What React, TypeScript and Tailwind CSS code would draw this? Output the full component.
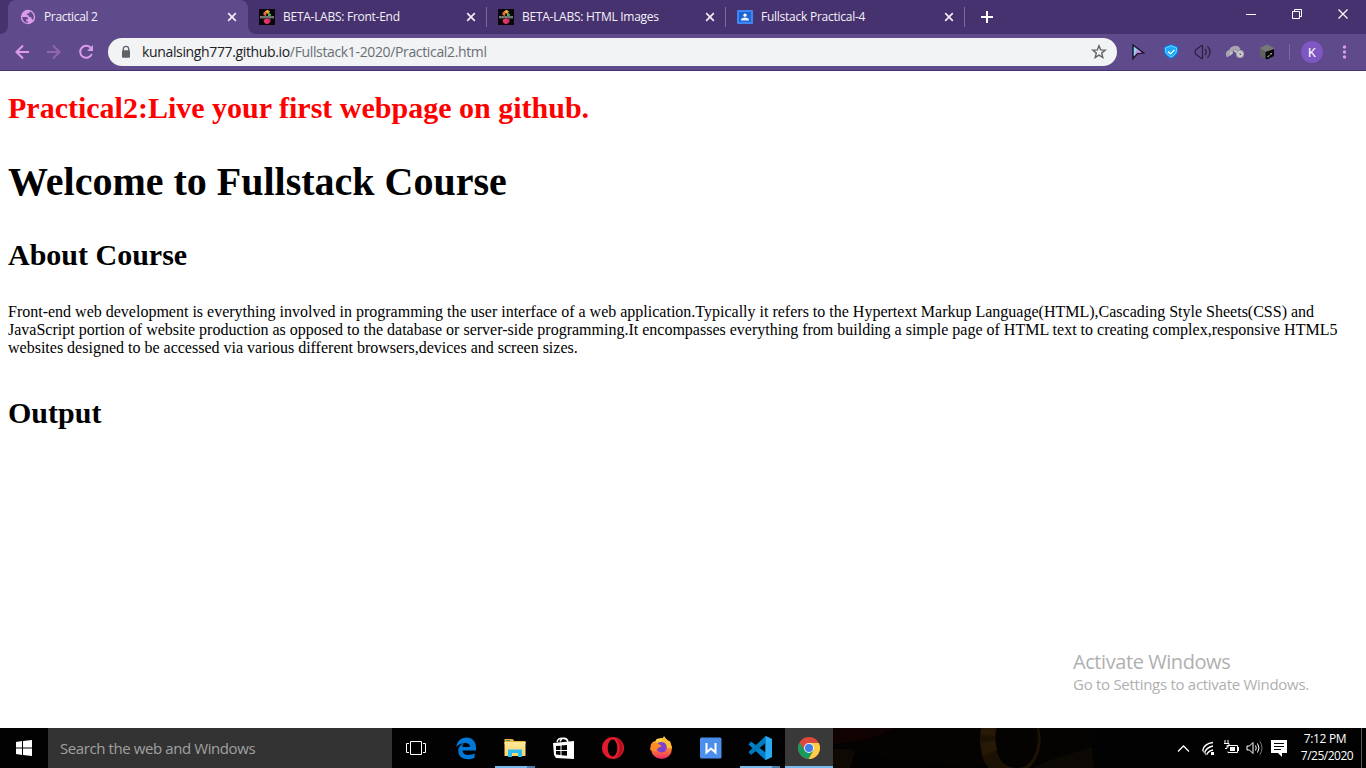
import type { ReactNode } from "react";

function Globe() {
  return (
    <svg width="16" height="16" viewBox="0 0 16 16" className="shrink-0">
      <circle cx="8" cy="8" r="7.2" fill="#dc9ceb" />
      <path d="M2.3 8.1h4.1c1.5 0 1.7 1 1.5 2.2H6.3v2.1H8v1.6C4.700 14 2.300 11.400 2.300 8.100zM9.600 2.400c2.500.7 4.200 3 4.200 5.600 0 1-.3 2-.8 2.900l-1.300-1.100c-.5-.5-.3-1.300-1-1.700-.8-.4-2.200-.1-2.200-1.200V5.900H6.900V4.600h1.500c.8 0 1.200-.9 1.200-2.200z" fill="#5f4b8b" />
    </svg>
  );
}

function BetaLabs() {
  return (
    <svg width="16" height="16" viewBox="0 0 16 16" className="shrink-0">
      <path fill="#080808" d="M0 0h16v16H0z" />
      <path d="M4.500 6V3.500L8 1.500 7 7z" fill="#ef6a3a" />
      <path d="M6 2.500L8.500 .8 11 2.500 9 5z" fill="#f4a93c" />
      <path d="M9 3.500l3 1.500-.5 3H9z" fill="#4fae55" />
      <path d="M4.500 11l3-1.500 4 1-.5 3L8 15.200 5.500 14z" fill="#e63863" />
      <path d="M8.500 10.500l3 .5-.5 2.500-2.500 1.300z" fill="#c92b78" />
      <path d="M1 7h14v2.500H1z" fill="#696767" />
      <path d="M1.500 8h1m2 0h1m2 0h1m2 0h1m2 0h1" stroke="#aaa" fill="none" />
    </svg>
  );
}

function Classroom() {
  return (
    <svg width="16" height="16" viewBox="0 0 16 16" className="shrink-0">
      <rect y="1" width="16" height="14" rx="1" fill="#4285f4" />
      <path fill="#1967d2" d="M2 3h12v10H2z" />
      <circle cx="8" cy="6.200" r="1.600" fill="#fff" />
      <path d="M4 11.500V10.500c0-1.300 2.500-2 4-2s4 .7 4 2v1z" fill="#e8f0fe" />
    </svg>
  );
}

function Close() {
  return (
    <svg width="16" height="16" viewBox="0 0 16 16" className="shrink-0">
      <path d="M4.200 4.200l7.600 7.600m0-7.600l-7.600 7.600" stroke="#f1ecf6" strokeWidth="1.700" />
    </svg>
  );
}

function Tab({ icon, children }: { icon: ReactNode; children: ReactNode }) {
  return (
    <div className="flex h-[34px] w-[239px] shrink-0 items-center pl-[11px]">
      {icon}
      <div className="ml-2 flex-1 whitespace-nowrap text-[12px] leading-4 text-[#f5f1fa]">{children}</div>
      <Close />
      <div className="ml-[7px] h-5 w-px bg-[#7c6b9c]" />
    </div>
  );
}

function TabStrip() {
  return (
    <div className="flex h-[34px] bg-[#46326e]">
      <div className="w-2 bg-[#5f4b8b]"><div className="h-full rounded-br-lg bg-[#46326e]" /></div>
      <div className="flex h-[34px] w-[240px] shrink-0 items-center rounded-t-lg bg-[#5f4b8b] pl-3 pr-2">
        <Globe />
        <div className="ml-2 flex-1 whitespace-nowrap text-[12px] leading-4 tracking-[-0.35px] text-[#f5f1fa]">Practical 2</div>
        <Close />
      </div>
      <div className="-mr-2 w-2 bg-[#5f4b8b]"><div className="h-full rounded-bl-lg bg-[#46326e]" /></div>
      <Tab icon={<BetaLabs />}><span className="tracking-[-0.27px]">BETA-LABS: Front-End</span></Tab>
      <Tab icon={<BetaLabs />}><span className="tracking-[-0.27px]">BETA-LABS: HTML Images</span></Tab>
      <Tab icon={<Classroom />}><span className="tracking-[-0.25px]">Fullstack Practical-4</span></Tab>
      <svg width="42" height="34" viewBox="0 0 42 34"><path d="M16 17h12M22 11v12" stroke="#fff" strokeWidth="2" /></svg>
      <svg width="138" height="34" viewBox="0 0 138 34" className="ml-auto" fill="none" stroke="#fff">
        <path d="M18 14.500h10M64.500 11.500h7v7h-7zM66.500 11.500v-2h7v7h-2" />
        <path d="M110.500 9.500l9 9m0-9l-9 9" strokeWidth="1.200" />
      </svg>
    </div>
  );
}

function Toolbar() {
  return (
    <div className="flex h-[37px] items-center border-b border-[#46326e] bg-[#5f4b8b]">
      <svg width="108" height="36" viewBox="0 0 108 36" fill="none" strokeWidth="2" className="shrink-0">
        <path d="M29 18H16.500m6.500-6.500L16.500 18l6.500 6.500" stroke="#dc9ceb" />
        <path d="M47 18h12.500M53 11.500l6.500 6.500-6.500 6.500" stroke="#9266ad" />
        <path d="M91 14.200A6 6 0 1 0 91.800 20" stroke="#dc9ceb" />
        <path d="M93 11v6h-6z" fill="#dc9ceb" />
      </svg>
      <div className="flex h-7 w-[1009px] shrink-0 items-center rounded-full bg-[#f1f3f4] pl-3 pr-[10px]">
        <svg width="12" height="16" viewBox="0 0 12 16"><path d="M3.300 7.500V5a2.700 2.700 0 0 1 5.400 0v2.500" fill="none" stroke="#5f6368" strokeWidth="1.300" /><rect x="2" y="6.200" width="8" height="7.500" rx="1" fill="#5f6368" /></svg>
        <div className="ml-[10px] flex-1 whitespace-nowrap text-[14px] leading-5 tracking-[-0.355px] text-[#202124]">kunalsingh777.github.io<span className="text-[#6b6f74]">/Fullstack1-2020/Practical2.html</span></div>
        <svg width="16" height="16" viewBox="0 0 16 16"><path d="M8 1.700l1.700 4.200 4.500.3-3.500 2.900 1.100 4.500L8 11.200l-3.800 2.400 1.100-4.500-3.500-2.900 4.500-.3z" fill="none" stroke="#5f6368" strokeWidth="1.400" /></svg>
      </div>
      <svg width="249" height="36" viewBox="1117 0 249 36" className="shrink-0">
        <path d="M1133 11l10.500 8-6 .5-4.500 5z" fill="#8ed4f5" stroke="#20152f" strokeWidth="1.500" />
        <path d="M1137 15.500l4.500 3-4.500 .5-3 3z" fill="#c68ae0" />
        <path d="M1171 10l7.200 2.800v3.700c0 4-3 6.800-7.200 8.500-4.200-1.700-7.200-4.500-7.200-8.500v-3.700z" fill="#0b7bf0" />
        <path d="M1171 11.800l5.500 2v2.500c0 3-2.200 5.200-5.500 6.700-3.300-1.500-5.500-3.700-5.500-6.700v-2.500z" fill="#1daafc" stroke="#7ee0ff" strokeWidth=".9" />
        <path d="M1168 17.500l2.500 2.400 4-4" fill="none" stroke="#fff" strokeWidth="1.300" />
        <path d="M1195.500 16l6-4.500q1-.5 1 1v11q0 1.500-1 1l-6-4.500q-1-2 0-4zM1205 15c1.500 1.500 1.500 4.500 0 6m2.500-8.500c3.500 3 3.500 8 0 11" fill="none" stroke="#2b2139" strokeWidth="1.200" />
        <path d="M1228.500 22.500c-2-3 0-5.500 2.500-5 0-4 6-5.500 8-1.500" fill="none" stroke="#aaa5ae" strokeWidth="3.500" />
        <path d="M1231 21c-1.500-1 0-3 1.500-1.500m1.500-2c1.500-2 3 0 2 1.500" fill="none" stroke="#c9c6cb" strokeWidth="2" />
        <circle cx="1240" cy="20" r="4" fill="#a9a6ab" /><circle cx="1240" cy="20" r="2.300" fill="none" stroke="#e8e6e9" />
        <path d="M1240 20l1 1" stroke="#56505b" />
        <path d="M1267 10.500l7 3.500v8l-7 3.500-7-3.500v-8z" fill="#616161" />
        <path d="M1267 10.500l7 3.500v2l-8 2-6-4z" fill="#777" />
        <path d="M1265.500 18l8.500-3v7l-7 3.500-1.500-.8z" fill="#080808" /><path d="M1267.500 22.500l2-.8m.5-1.500l2-.6" stroke="#ddd" />
        <path d="M1289.500 10v16" stroke="#8663a2" />
        <circle cx="1312" cy="18" r="11" fill="#7e57c2" />
        <text x="1312" y="22.500" fill="#fff" fontFamily="Roboto" fontSize="12.500" textAnchor="middle">K</text>
        <g fill="#dc9ceb"><circle cx="1344.500" cy="13" r="1.700" /><circle cx="1344.500" cy="18" r="1.700" /><circle cx="1344.500" cy="23" r="1.700" /></g>
      </svg>
    </div>
  );
}

function PageContent() {
  return (
    <main className="relative h-[657px] bg-white px-2 pt-5 font-['Liberation_Serif',serif] text-black">
      <h2 className="text-[30px] font-bold leading-[34px] text-[#ff0000]">Practical2:Live your first webpage on github.</h2>
      <h1 className="mt-[34px] text-[40px] font-bold leading-[46px]">Welcome to Fullstack Course</h1>
      <h2 className="mt-[33px] text-[30px] font-bold leading-[34px]">About Course</h2>
      <p className="mt-[31px] whitespace-nowrap text-[16px] leading-[18px]">
        Front-end web development is everything involved in programming the user interface of a web application.Typically it refers to the Hypertext Markup Language(HTML),Cascading Style Sheets(CSS) and<br />
        JavaScript portion of website production as opposed to the database or server-side programming.It encompasses everything from building a simple page of HTML text to creating complex,responsive HTML5<br />
        websites designed to be accessed via various different browsers,devices and screen sizes.
      </p>
      <h2 className="mt-[39px] text-[30px] font-bold leading-[34px]">Output</h2>
      <aside className="absolute left-[1073px] top-[578px] whitespace-nowrap font-['Open_Sans',sans-serif] text-[#b0b0b0]">
        <div className="text-[20px] leading-[26px] tracking-[-0.43px]">Activate Windows</div>
        <div className="-mt-px text-[15px] leading-5 tracking-[-0.28px]">Go to Settings to activate Windows.</div>
      </aside>
    </main>
  );
}

function TaskIcons() {
  return (
    <svg width="969" height="40" viewBox="392 728 969 40" className="shrink-0">
      <defs>
        <linearGradient id="fox" x2="0" y2="1"><stop stopColor="#ffe44b" /><stop offset=".5" stopColor="#ff872b" /><stop offset="1" stopColor="#ed256c" /></linearGradient>
        <linearGradient id="folder" x2="0" y2="1"><stop stopColor="#ffe79b" /><stop offset="1" stopColor="#f8d56b" /></linearGradient>
      </defs>
      <path fill="#020202" d="M392 728h969v40H392z" />
      <path d="M833 728h62c-18 10-38 14-62 16z" fill="#120303" />
      <path d="M833 749h17l5 2-5 17h-17z" fill="#0e0903" />
      <path d="M850 749c50 15 120 21 180 14 28-3 50-9 65-18v-17H895c-20 10-40 14-62 17z" fill="#040301" />
      <path d="M1092 747l2 21h-62l18-8z" fill="#0c0804" />
      <path d="M981 728c-3 18 0 32 8 40h40c11-10 14-27 10-40h-2c3 18-3 35-14 39-22 6-32-17-26-39z" fill="#1c1204" />
      <path d="M981 743l14-3 2 10-14 6zM981 728h15l-1 8-14-1z" fill="#261a07" />
      <g stroke="#fff" fill="none"><path d="M410.500 741.500h11v13h-11zM409 743.500h-2.500v9h2.500m14-9h2.500v9h-2.500" /></g>
      <path d="M456.200 746.800c1-5.800 4.600-9.300 10.200-9.300 6.300 0 9.600 4.700 9.600 10v3h-13.400c0 5 7.400 5.700 12 2.800v4.500c-7.400 3.500-16.300 1-16.300-6.700 0-4 2.600-6.500 5.800-8-1.300 1.400-1.700 2.600-1.700 3.800h7.700c0-5.700-9.300-4.800-13.900-.1z" fill="#0078d7" />
      <path d="M504.500 739h8l2 2h11v3h-21z" fill="#e8b33e" /><path d="M504.500 742h21v14h-21z" fill="url(#folder)" /><path d="M508 749.500h14v7.500h-4v-4h-6v4h-4z" fill="#2bbcf0" /><path d="M506 740.500h4" stroke="#2a9d78" />
      <path d="M553 743l21-2v18l-18-1-2-3z" fill="#fff" /><path d="M557 742c1-5 9-5 11 0m-8-.5c2-5 7-4 8 0" stroke="#fff" strokeWidth="1.400" fill="none" /><path d="M556 746l4.500-.3v4.300H556m5.500-4.400l5.500-.6v5h-5.500M556 751h4.500v4l-4.500-.5m5.500-3.500h5.500v4.800l-5.500-.5z" fill="#020202" />
      <ellipse cx="613" cy="748" rx="11" ry="11" fill="#e21b2d" /><ellipse cx="612.500" cy="748" rx="4.800" ry="8.500" fill="#020202" /><path d="M616 738c9 4 9 16 0 20 3-4 4-7 4-10s-1-7-4-10z" fill="#a90e1d" />
      <circle cx="661.500" cy="748.500" r="10.500" fill="url(#fox)" />
      <path d="M651 748l2-7 3 3 4-1 4-7 3 4 1 2 2-1 2 7z" fill="#ffbd36" />
      <path d="M656 744c3-3 9-3 10.500 1.500 1.500 6-4 8.500-8 6-2.500-2-3-4.500-2.500-7.500z" fill="#7b42cf" /><path d="M651 744c3-3 7-1 9 1l2 1-4 2-3 3-5-1z" fill="#ff8c22" /><path d="M654 737l2 4-4 1z" fill="#020202" />
      <rect x="700" y="737.500" width="21.500" height="21" rx="1.500" fill="#4b8eeb" /><path d="M706.500 743v9.500l4.500-4 4.500 4V743" fill="none" stroke="#fff" strokeWidth="2" />
      <path d="M765.500 736l6.500 3v18l-6.500 3-17-15.500 2.500-3 14.500 11z" fill="#0080cc" /><path d="M748.500 752l17-16v7l-14.500 12z" fill="#0079bd" /><path d="M765.500 736l6.500 3v18l-6.500 3z" fill="#29aaf2" />
      <path d="M785 728h48v40h-48z" fill="#3a3939" />
      <circle cx="809" cy="748" r="11" fill="#dd493c" />
      <path d="M799.500 742.500A11 11 0 0 0 808.500 759l5-8.300-4.500-2.700-4 2.500z" fill="#179b5c" /><path d="M809 743h9.800A11 11 0 0 1 808.500 759l5-8.300z" fill="#ffce44" /><circle cx="809" cy="748" r="5" fill="#f2f2f2" /><circle cx="809" cy="748" r="4" fill="#3f7dec" />
      <path d="M495 766h32v2h-32zM740 766h32v2h-32zM785 766h48v2h-48z" fill="#76b9ed" /><path d="M527 766h8v2h-8zM772 766h8v2h-8z" fill="#4c7fac" />
      <g fill="none" stroke="#fff" strokeWidth="1.300">
        <path d="M1178 751.500l5.500-5.500 5.500 5.500" />
        <path d="M1202.500 751c1-5 5-8 10.500-8.500m-8.500 10.500c1-4 4-6 8.500-7m-6 8.500c1-3 3-4 6-4.500" /><path d="M1202.500 750l4 5" stroke="#aaa" />
        <path d="M1228 745.500h9.500v7h-9.500v-1m0-6v2" strokeWidth="1" /><path d="M1225 740v3m3-3v3m-4 .5h5v2h-2v3h-2" strokeWidth="1" />
        <path d="M1247 746h2.500l3.500-3.500v11l-3.500-3.500H1247zm8.500-.5q1.500 2.500 0 5m2-7q3 4.500 0 9" strokeWidth="1" /><path d="M1260 741.500q4 6.500 0 13" stroke="#777" strokeWidth="1" />
      </g>
      <path d="M1211 752h3v3h-3zM1230 747h5v4h-5zM1238 747h1v4h-1zM1271 740h16v13h-5v4l-4-4h-7z" fill="#fff" />
      <path d="M1274 743.500h10m-10 3h10m-10 3h7" stroke="#020202" />
    </svg>
  );
}

function Taskbar() {
  return (
    <footer className="relative flex h-10 bg-[#020202]">
      <div className="flex w-12 shrink-0 items-center justify-center">
        <svg width="16" height="16" viewBox="0 0 16 16" fill="#fff"><path d="M0 2l6-1v6.500H0zM7 1l9-1v7.500H7zM0 8.500h6V15l-6-1zM7 8.500h9V16l-9-1z" /></svg>
      </div>
      <div className="flex w-[344px] shrink-0 items-center bg-[#333] pl-3 text-[15px] leading-5 tracking-[-0.41px] text-[#a0a0a0]">Search the web and Windows</div>
      <TaskIcons />
      <div className="w-px bg-[#555]" />
      <div className="absolute right-[9px] top-[2px] w-16 whitespace-nowrap text-center text-[12px] leading-[17px] text-white"><div className="tracking-[-0.35px]">7:12 PM</div><div className="pl-1 tracking-[-0.5px]">7/25/2020</div></div>
    </footer>
  );
}

export default function App() {
  return (
    <div className="h-[768px] w-[1366px] overflow-hidden font-['Open_Sans',sans-serif]">
      <TabStrip />
      <Toolbar />
      <PageContent />
      <Taskbar />
    </div>
  );
}
